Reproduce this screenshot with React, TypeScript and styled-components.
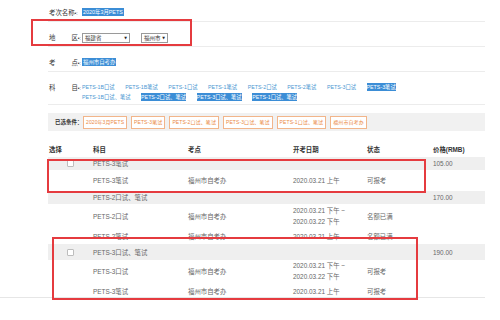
import React from 'react'
import styled, { createGlobalStyle } from 'styled-components'

const GlobalStyle = createGlobalStyle`
  html, body {
    margin: 0;
    padding: 0;
    background: #fff;
  }
  body {
    font-family: "Liberation Sans", "Noto Sans CJK SC", sans-serif;
    font-size: 6.4px;
    color: #666;
  }
`

const Page = styled.div`
  position: relative;
  width: 500px;
  height: 320px;
  overflow: hidden;
  padding-left: 48px;
  box-sizing: border-box;
`

const Content = styled.div`
  width: 437px;
`

const FormRow = styled.div<{ top?: number }>`
  display: flex;
  align-items: flex-start;
  padding: ${({ top }) => top ?? 11}px 0 3px;
  border-bottom: 1px solid #ececec;
  line-height: 10px;
`

const Label = styled.div`
  width: 34px;
  flex-shrink: 0;
  display: flex;
  justify-content: space-between;
  padding: 0 1px;
  box-sizing: border-box;
  color: #333;
  white-space: nowrap;
`

const Mark = styled.span`
  font-size: 5px;
`

const Values = styled.div`
  display: flex;
  flex-wrap: wrap;
  align-items: center;
  row-gap: 2px;
  width: 400px;
`

const Picked = styled.span`
  background: #3b8dd6;
  color: #fff;
  padding: 0 1px;
  font-size: 5.4px;
  line-height: 8px;
`

const SubjectLink = styled.span<{ picked?: boolean; gap?: number }>`
  margin-right: ${({ gap }) => gap ?? 10.5}px;
  color: ${({ picked }) => (picked ? '#fff' : '#4b97d2')};
  background: ${({ picked }) => (picked ? '#3b8dd6' : 'transparent')};
  font-size: 5.3px;
  line-height: 8px;
  white-space: nowrap;
`

const Select = styled.div<{ w: number }>`
  display: flex;
  align-items: center;
  justify-content: space-between;
  width: ${({ w }) => w}px;
  height: 10px;
  box-sizing: border-box;
  border: 1px solid #9a9a9a;
  padding: 0 2px;
  margin-right: 11px;
  color: #333;
  font-size: 5.5px;
  white-space: nowrap;

  &::after {
    content: '▼';
    font-family: "DejaVu Sans", sans-serif;
    font-size: 3.5px;
    color: #222;
  }
`

const ConditionBar = styled.div`
  display: flex;
  align-items: center;
  margin-top: 8px;
  height: 18px;
  background: #f1f1f1;
  padding-left: 7px;
`

const ConditionLabel = styled.span`
  width: 28px;
  color: #333;
  font-size: 5.5px;
  font-weight: bold;
  white-space: nowrap;
`

const Tag = styled.span`
  border: 1px solid #f2b58a;
  color: #ea8a45;
  background: #fff;
  height: 11px;
  line-height: 11px;
  font-size: 5px;
  padding: 0 2px;
  margin-right: 4px;
  white-space: nowrap;
  letter-spacing: 0.1px;
`

const Grid = styled.div<{ h: number; shaded?: boolean; head?: boolean }>`
  display: grid;
  grid-template-columns: 45px 95px 105px 74px 66px 52px;
  align-items: center;
  height: ${({ h }) => h}px;
  background: ${({ shaded }) => (shaded ? '#efefef' : '#fff')};
  color: ${({ head }) => (head ? '#333' : '#666')};
  font-weight: ${({ head }) => (head ? 'bold' : 'normal')};
  white-space: nowrap;
`

const HeadCell = styled.span`
  padding-left: 1px;
`

const CheckCell = styled.span`
  display: flex;
  justify-content: center;
`

const Checkbox = styled.span`
  width: 5px;
  height: 5px;
  border: 1px solid #bdbdbd;
  background: #fff;
  border-radius: 1px;
`

const DateCell = styled.span`
  display: flex;
  flex-direction: column;
  line-height: 11px;
`

const TableHead = styled(Grid)`
  margin-top: 10px;
`

const BottomLine = styled.div`
  position: absolute;
  left: 0;
  right: 15px;
  top: 297px;
  border-top: 1px solid #e6e6e6;
`

const Annotation = styled.div`
  position: absolute;
  border: 2px solid #e53b3f;
  box-sizing: border-box;
`

type Sub = { name: string; place: string; dates: string[]; status: string; h: number }
type Group = { name: string; price: string; check: boolean; h: number; subs: Sub[] }

const groups: Group[] = [
  {
    name: 'PETS-3笔试',
    price: '105.00',
    check: true,
    h: 13,
    subs: [{ name: 'PETS-3笔试', place: '福州市自考办', dates: ['2020.03.21 上午'], status: '可报考', h: 21 }],
  },
  {
    name: 'PETS-2口试、笔试',
    price: '170.00',
    check: false,
    h: 13,
    subs: [
      { name: 'PETS-2口试', place: '福州市自考办', dates: ['2020.03.21 下午 ~', '2020.03.22 下午'], status: '名额已满', h: 24 },
      { name: 'PETS-2笔试', place: '福州市自考办', dates: ['2020.03.21 上午'], status: '名额已满', h: 16 },
    ],
  },
  {
    name: 'PETS-3口试、笔试',
    price: '190.00',
    check: true,
    h: 16,
    subs: [
      { name: 'PETS-3口试', place: '福州市自考办', dates: ['2020.03.21 下午 ~', '2020.03.22 下午'], status: '可报考', h: 22 },
      { name: 'PETS-3笔试', place: '福州市自考办', dates: ['2020.03.21 上午'], status: '可报考', h: 19 },
    ],
  },
]

const subjectsA = ['PETS-1B口试', 'PETS-1B笔试', 'PETS-1口试', 'PETS-1笔试', 'PETS-2口试', 'PETS-2笔试', 'PETS-3口试']
const subjectsB: [string, boolean][] = [
  ['PETS-1B口试、笔试', false],
  ['PETS-2口试、笔试', true],
  ['PETS-3口试、笔试', true],
  ['PETS-1口试、笔试', true],
]
const tags = ['2020年3月PETS', 'PETS-3笔试', 'PETS-2口试、笔试', 'PETS-3口试、笔试', 'PETS-1口试、笔试', '福州市自考办']

export default function App() {
  return (
    <Page>
      <GlobalStyle />
      <Content>
        <FormRow top={8}>
          <Label>
            <span>
              考次名称<Mark>•:</Mark>
            </span>
          </Label>
          <Values>
            <Picked>2020年3月PETS</Picked>
          </Values>
        </FormRow>
        <FormRow>
          <Label>
            <span>地</span>
            <span>
              区<Mark>•:</Mark>
            </span>
          </Label>
          <Values>
            <Select w={48}>福建省</Select>
            <Select w={27}>福州市</Select>
          </Values>
        </FormRow>
        <FormRow>
          <Label>
            <span>考</span>
            <span>
              点<Mark>•:</Mark>
            </span>
          </Label>
          <Values>
            <Picked>福州市自考办</Picked>
          </Values>
        </FormRow>
        <FormRow>
          <Label>
            <span>科</span>
            <span>
              目<Mark>•:</Mark>
            </span>
          </Label>
          <Values>
            {subjectsA.map((s) => (
              <SubjectLink key={s}>{s}</SubjectLink>
            ))}
            <SubjectLink picked gap={80}>
              PETS-3笔试
            </SubjectLink>
            {subjectsB.map(([s, p]) => (
              <SubjectLink key={s} picked={p}>
                {s}
              </SubjectLink>
            ))}
          </Values>
        </FormRow>

        <ConditionBar>
          <ConditionLabel>已选条件：</ConditionLabel>
          {tags.map((t) => (
            <Tag key={t}>{t}</Tag>
          ))}
        </ConditionBar>

        <TableHead h={16} head>
          <HeadCell>选择</HeadCell>
          <span>科目</span>
          <span>考点</span>
          <span>开考日期</span>
          <span>状态</span>
          <span>价格(RMB)</span>
        </TableHead>
        {groups.map((g) => (
          <React.Fragment key={g.name}>
            <Grid h={g.h} shaded>
              <CheckCell>{g.check && <Checkbox />}</CheckCell>
              <span>{g.name}</span>
              <span />
              <span />
              <span />
              <span>{g.price}</span>
            </Grid>
            {g.subs.map((s) => (
              <Grid h={s.h} key={s.name}>
                <span />
                <span>{s.name}</span>
                <span>{s.place}</span>
                <DateCell>
                  {s.dates.map((d) => (
                    <span key={d}>{d}</span>
                  ))}
                </DateCell>
                <span>{s.status}</span>
                <span />
              </Grid>
            ))}
          </React.Fragment>
        ))}
      </Content>
      <BottomLine />

      <Annotation style={{ left: 31, top: 19, width: 161, height: 27 }} />
      <Annotation style={{ left: 47, top: 159, width: 379, height: 34 }} />
      <Annotation style={{ left: 52, top: 237, width: 366, height: 63 }} />
    </Page>
  )
}
